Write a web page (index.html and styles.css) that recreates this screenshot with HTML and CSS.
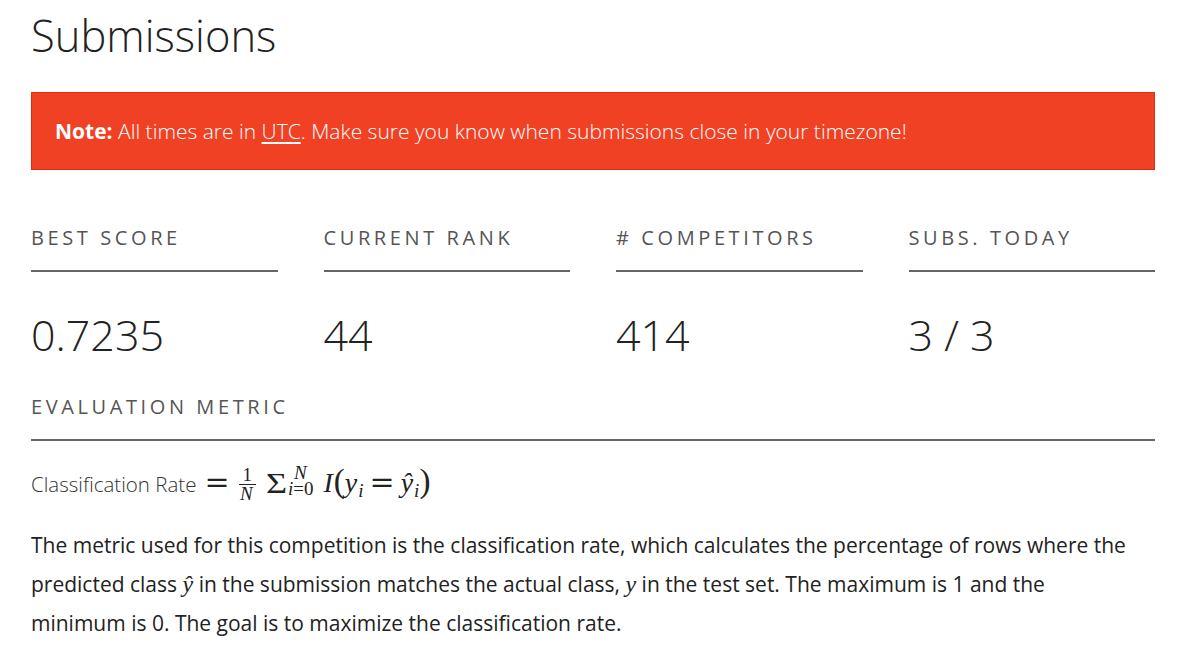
FILE: index.html
```html
<!DOCTYPE html>
<html lang="en">
<head>
<meta charset="utf-8">
<title>Submissions</title>
<link rel="stylesheet" href="styles.css">
</head>
<body>
<main class="page">
  <h1 class="title">Submissions</h1>
  <div class="alert"><strong>Note:</strong> All times are in <a href="#" class="alert-link">UTC</a>. Make sure you know when submissions close in your timezone!</div>

  <section class="stats">
    <div class="stat">
      <div class="stat-label">Best Score</div>
      <div class="stat-value">0.7235</div>
    </div>
    <div class="stat">
      <div class="stat-label">Current Rank</div>
      <div class="stat-value">44</div>
    </div>
    <div class="stat">
      <div class="stat-label"># Competitors</div>
      <div class="stat-value">414</div>
    </div>
    <div class="stat">
      <div class="stat-label">Subs. Today</div>
      <div class="stat-value">3 / 3</div>
    </div>
  </section>

  <section class="metric">
    <div class="stat-label">Evaluation Metric</div>
    <div class="formula"><span class="mtext">Classification Rate</span><span class="katex"><span class="mrel first">=</span><span class="frac"><span class="num">1</span><span class="den mi">N</span></span><span class="sigma">Σ</span><span class="lims"><span class="lim-sup mi">N</span><span class="lim-sub"><span class="mi">i</span>=0</span></span><span class="mi big-i">I</span><span class="paren">(</span><span class="mi">y</span><span class="msub mi">i</span><span class="mrel">=</span><span class="mi">ŷ</span><span class="msub mi">i</span><span class="paren">)</span></span></div>
    <p class="desc">The metric used for this competition is the classification rate, which calculates the percentage of rows where the predicted class <span class="mi inl">ŷ</span> in the submission matches the actual class, <span class="mi inl">y</span> in the test set. The maximum is 1 and the minimum is 0. The goal is to maximize the classification rate.</p>
  </section>
</main>
</body>
</html>
```

FILE: styles.css
```css
html, body {
  margin: 0;
  padding: 0;
  background: #ffffff;
}

body {
  font-family: "Open Sans", "Noto Sans", sans-serif;
  color: #222;
}

.page {
  width: 1124px;
  margin-left: 31px;
}

.title {
  font-weight: 300;
  font-size: 43.5px;
  line-height: 52px;
  margin: 10px 0 30px 0;
  color: #222;
}

.alert {
  background: #f04124;
  border: 1px solid #de2d0f;
  color: #fff;
  font-size: 21px;
  font-weight: 300;
  padding: 24px 23px;
  line-height: 28px;
}

.alert strong {
  font-weight: 700;
}

.alert-link {
  color: #fff;
  text-decoration: underline;
  text-underline-offset: 3px;
}

.stats {
  display: grid;
  grid-template-columns: repeat(4, 1fr);
  column-gap: 46px;
  margin-top: 53px;
}

.stat-label {
  font-size: 20px;
  letter-spacing: 3.6px;
  text-transform: uppercase;
  color: #555;
  line-height: 30px;
  padding-bottom: 17px;
  border-bottom: 2px solid #666;
}

.stat-value {
  font-size: 43px;
  font-weight: 300;
  line-height: 60px;
  margin-top: 33px;
  color: #222;
}

.metric {
  margin-top: 27px;
}

.formula {
  margin-top: 16px;
  height: 48px;
  line-height: 48px;
  white-space: nowrap;
}

.mtext {
  font-weight: 300;
  font-size: 20.5px;
  color: #333;
}

.katex {
  font-family: "Liberation Serif", "DejaVu Serif", serif;
  font-size: 28px;
  color: #222;
}

.mrel {
  font-family: "DejaVu Serif", serif;
  font-size: 30px;
  margin: 0 6px;
}

.mrel.first {
  margin-left: 8px;
}

.mi {
  font-style: italic;
}

.frac {
  display: inline-flex;
  flex-direction: column;
  align-items: center;
  font-size: 19px;
  line-height: 16px;
  vertical-align: 11px;
  margin: 0 5px 0 3px;
}

.num {
  border-bottom: 1.5px solid #222;
  padding: 0 4px 1px;
}

.den {
  padding-top: 1px;
  padding-right: 2px;
}

.sigma {
  display: inline-block;
  font-size: 29px;
  margin-left: 5px;
  transform: scaleX(1.25);
  transform-origin: left center;
  margin-right: 5px;
  vertical-align: -1px;
}

.lims {
  display: inline-flex;
  flex-direction: column;
  font-size: 19px;
  line-height: 16px;
  vertical-align: 13px;
  margin-left: 0;
  margin-right: 10px;
}

.lim-sup {
  padding-left: 6px;
}

.big-i {
  margin-right: 1px;
}

.paren {
  font-size: 33px;
}

.msub {
  font-size: 19px;
  vertical-align: -5px;
  margin-left: 1px;
}

.desc {
  font-size: 21px;
  line-height: 39px;
  margin: 21px 0 0 0;
  padding-right: 16px;
  color: #222;
}

.inl {
  font-family: "Liberation Serif", serif;
  font-size: 24px;
}
```
